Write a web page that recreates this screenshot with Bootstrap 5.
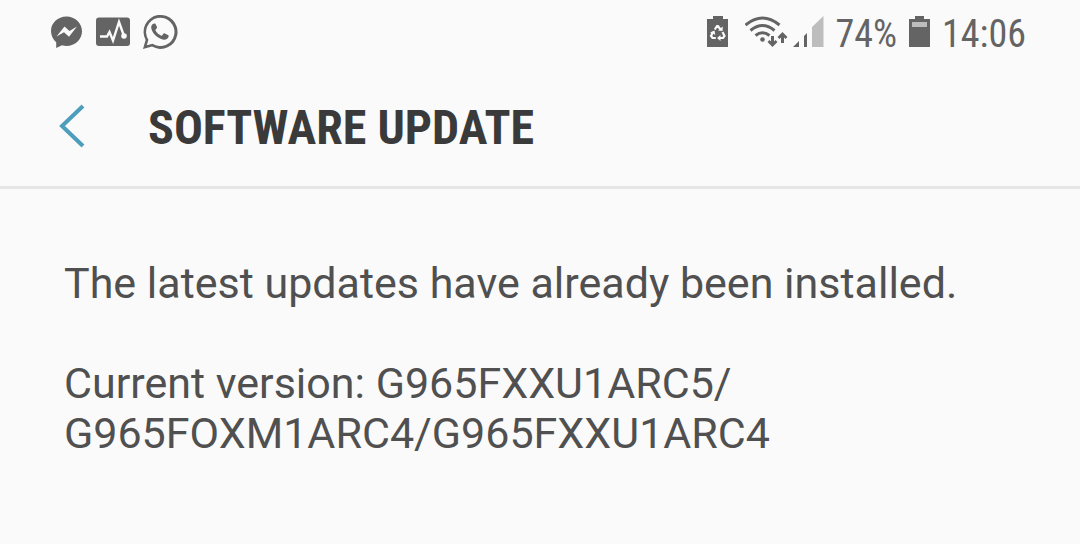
<!DOCTYPE html>
<html lang="en">
<head>
<meta charset="utf-8">
<meta name="viewport" content="width=device-width, initial-scale=1">
<title>Software update</title>
<link href="https://cdn.jsdelivr.net/npm/bootstrap@5.3.0/dist/css/bootstrap.min.css" rel="stylesheet">
<style>
  body { background: #fafafa; color: #505050; font-family: Roboto, sans-serif; }
  .status-bar { height: 64px; padding: 0 54px 0 50px; color: #646464; font: 38px/60px "Roboto Condensed", Roboto, sans-serif; }
  .status-bar svg, .back-link svg { display: block; flex: none; }
  .status-bar span, .status-bar time { padding-top: 4px; }
  .status-apps { gap: 11px; }
  .battery-icon { margin: 0 12px; }
  .title-bar { height: 125px; padding: 0 60px 0 56px; border-bottom: 3px solid #e6e6e6; }
  .back-link { width: 92px; color: #4d9dbd; }
  .title-bar h1 { padding-top: 6px; font: 700 48px/60px "Roboto Condensed", Roboto, sans-serif; color: #3a3a3a; }
  .update-info { padding: 69px 64px; font-size: 43px; line-height: 50px; }
  .update-info p { margin-bottom: 50px; }
</style>
</head>
<body>
<header>
  <div class="status-bar d-flex align-items-center justify-content-between">
    <div class="status-apps d-flex align-items-center">
      <svg width="34" height="40" viewBox="0 0 34 40" role="img" aria-label="Messenger">
        <path fill="currentColor" d="M16.500 4.500C7.800 4.500 1 11 1 19c0 4.700 2 8.500 5.200 11.300V36l5.800-2.800c1.500.5 3 .7 4.500.7C25 33.900 32 27.500 32 19.200S25 4.500 16.500 4.500z"/>
        <path fill="#fafafa" d="M6.500 24.500L14.500 14.500l5 4.500 7.500-4.500-8 10.300-5-4.500z"/>
      </svg>
      <svg width="36" height="40" viewBox="0 0 36 40" role="img" aria-label="Activity monitor">
        <rect x="1" y="5.500" width="34" height="28.500" rx="3" fill="currentColor"/>
        <path d="M5 24.500h7l2.500-4.500 3.500 8.500L24 10l5 14" fill="none" stroke="#fafafa" stroke-width="2.400"/>
        <circle cx="29" cy="24" r="2.800" fill="#fafafa"/>
      </svg>
      <svg width="36" height="40" viewBox="0 0 36 40" role="img" aria-label="WhatsApp">
        <path d="M1 37l2.600-9A17 17 0 1 1 10 34.600z" fill="currentColor"/>
        <path d="M4.800 33.300l1.600-5.600A14.200 14.200 0 1 1 10.500 31.800z" fill="#fafafa"/>
        <path fill="currentColor" d="M12.200 11.500c-1.600.2-3.200 2-3 4.300.4 4.800 6.500 11 12.300 11.900 2.500.3 4.900-1.300 5.100-3.300.1-.7 0-1-.6-1.400l-3.200-1.600c-.6-.3-1-.2-1.400.3l-1.300 1.700c-.3.400-.7.400-1.200.2-2.400-1.100-4.200-2.800-5.400-5-.3-.5-.1-.8.200-1.100l1.200-1.600c.2-.4.200-.7 0-1.100l-1.400-2.800c-.3-.5-.7-.6-1.300-.5z"/>
      </svg>
    </div>
    <div class="d-flex align-items-center">
      <svg width="38" height="40" viewBox="0 0 38 40" role="img" aria-label="Battery saver">
        <path fill="currentColor" d="M6 4h10v3h5v28H0V7h6z"/>
        <path d="M7.800 17.500L10 14h1l2.500 3.500M15.500 20l2 4-1.500 2h-3M8.800 26H5.500L4 24l2-4" fill="none" stroke="#fafafa" stroke-width="2.200"/>
        <path fill="#fafafa" d="M11 18.500l4.500.6.400-4.500zM13.500 23v6l-3.500-3zM3 20.500l4.500-2 .8 4.200z"/>
      </svg>
      <svg width="48" height="40" viewBox="0 0 48 40" role="img" aria-label="Wi-Fi">
        <g fill="none" stroke="currentColor" stroke-width="3">
          <path d="M.500 13Q17.500-1 34.500 13M5.500 18.500Q17.500 8.500 29.500 18.500M10.500 23.500Q17.500 18 24.500 23.500"/>
          <path d="M27.500 24v8M37.500 31v-9"/>
        </g>
        <circle cx="17.500" cy="27.500" r="2.300" fill="currentColor"/>
        <path d="M23.500 29l4 4 4-4M33.500 26l4-4 4 4" fill="none" stroke="currentColor" stroke-width="2.800"/>
      </svg>
      <svg width="43" height="40" viewBox="0 0 43 40" role="img" aria-label="Mobile signal">
        <path fill="currentColor" d="M0 35l6-6v6zM11 24l3-3v14h-3z"/>
        <path fill="#bdbdbd" d="M19 15L30.500 4v31H19z"/>
      </svg>
      <span>74%</span>
      <svg class="battery-icon" width="21" height="40" viewBox="0 0 21 40" role="img" aria-label="Battery">
        <path fill="currentColor" d="M6 4h9v3h6v28H0V7h6z"/>
        <path fill="#bdbdbd" d="M3 10h15v5H3z"/>
      </svg>
      <time datetime="14:06">14:06</time>
    </div>
  </div>
  <div class="title-bar d-flex align-items-center">
    <a class="back-link" href="#" aria-label="Back">
      <svg width="32" height="46" viewBox="0 0 32 46"><path d="M27 4L6 24l21 20" fill="none" stroke="currentColor" stroke-width="4"/></svg>
    </a>
    <h1 class="mb-0">SOFTWARE UPDATE</h1>
  </div>
</header>
<main class="update-info">
  <p>The latest updates have already been installed.</p>
  <p class="mb-0">Current version: G965FXXU1ARC5/<br>G965FOXM1ARC4/G965FXXU1ARC4</p>
</main>
<script src="https://cdn.jsdelivr.net/npm/bootstrap@5.3.0/dist/js/bootstrap.bundle.min.js"></script>
</body>
</html>
